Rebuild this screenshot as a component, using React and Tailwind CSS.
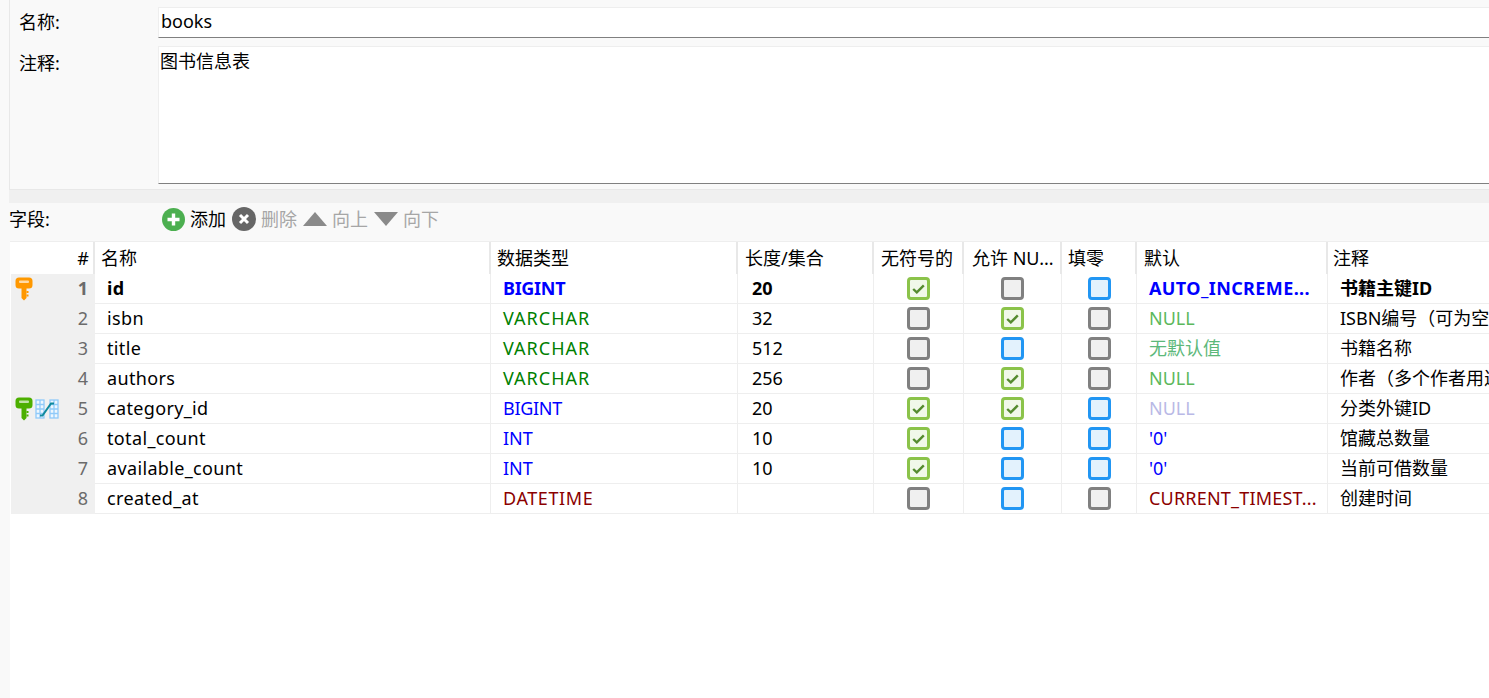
import React from "react";

const gridCols = "grid grid-cols-[84px_396px_247px_136px_90px_98px_75px_191px_161px]";

const headers = [
  { label: "名称", pad: "pl-[6px]" },
  { label: "数据类型", pad: "pl-[6px]" },
  { label: "长度/集合", pad: "pl-[7px]" },
  { label: "无符号的", pad: "pl-[7px]" },
  { label: "允许 NU...", pad: "pl-[8px]" },
  { label: "填零", pad: "pl-[6px]" },
  { label: "默认", pad: "pl-[7px]" },
  { label: "注释", pad: "pl-[5px]" },
];

const blue = "text-[#0000ff]";
const green = "text-[#008000]";
const red = "text-[#8b0000]";

// spacing per type, the screenshot's UI font sets capitals a bit wider
const typeSpacing = {
  BIGINT: "tracking-[-0.3px]",
  INT: "",
  VARCHAR: "tracking-[1px]",
  DATETIME: "tracking-[0.6px]",
};

const rows = [
  { n: 1, key: "orange", name: "id", type: "BIGINT", color: blue, len: "20", checks: ["on", "off", "na"], def: "AUTO_INCREME...", defColor: blue, defSpacing: "tracking-[0.4px]", note: "书籍主键ID", bold: true },
  { n: 2, name: "isbn", type: "VARCHAR", color: green, len: "32", checks: ["off", "on", "off"], def: "NULL", defColor: "text-[#5cb85c]", note: "ISBN编号（可为空）" },
  { n: 3, name: "title", type: "VARCHAR", color: green, len: "512", checks: ["off", "na", "off"], def: "无默认值", defColor: "text-[#5cb87a]", note: "书籍名称" },
  { n: 4, name: "authors", type: "VARCHAR", color: green, len: "256", checks: ["off", "on", "off"], def: "NULL", defColor: "text-[#5cb85c]", note: "作者（多个作者用逗号分隔）" },
  { n: 5, key: "green", fk: true, name: "category_id", type: "BIGINT", color: blue, len: "20", checks: ["on", "on", "na"], def: "NULL", defColor: "text-[#b9b9e6]", note: "分类外键ID" },
  { n: 6, name: "total_count", type: "INT", color: blue, len: "10", checks: ["on", "na", "na"], def: "'0'", defColor: blue, note: "馆藏总数量" },
  { n: 7, name: "available_count", type: "INT", color: blue, len: "10", checks: ["on", "na", "na"], def: "'0'", defColor: blue, note: "当前可借数量" },
  { n: 8, name: "created_at", type: "DATETIME", color: red, len: "", checks: ["off", "na", "off"], def: "CURRENT_TIMEST...", defColor: red, defSpacing: "tracking-[0.2px]", note: "创建时间" },
];

const KeyIcon = ({ color }) => (
  <svg width="18" height="24" viewBox="0 0 18 24" className="shrink-0">
    <path
      d="M4 0.5h10a3.5 3.5 0 0 1 3.5 3.5v4a3.5 3.5 0 0 1-3.5 3.5h-2.5v9.5l-2.5 2.5-2.5-2.5v-9.5H4A3.5 3.5 0 0 1 .5 8V4A3.5 3.5 0 0 1 4 .5z"
      fill={color}
    />
    <rect x="4" y="3.5" width="10" height="2.5" rx="1" fill="#ffffff" opacity="0.65" />
    <path d="M11.5 14h2v2h-2zM11.5 17.5h2v2h-2z" fill={color} />
  </svg>
);

const ForeignKeyIcon = () => (
  <svg width="24" height="20" viewBox="0 0 24 20" className="shrink-0">
    <g stroke="#90caf9" strokeWidth="1.3" fill="#eef7fe">
      <rect x="1" y="1" width="8" height="18" />
      <rect x="15" y="1" width="8" height="18" />
      <path d="M1 5.5h8M1 10h8M1 14.5h8M5 1v18M15 5.5h8M15 10h8M15 14.5h8M19 1v18" fill="none" />
    </g>
    <path d="M5 16.5h2.5L16 4.5h3" stroke="#0f8a9d" strokeWidth="2" fill="none" />
  </svg>
);

const Check = ({ state }) => {
  const styles = {
    on: "border-[#8bc34a] bg-[#f1f8e9]",
    off: "border-[#808080] bg-[#f0f0f0]",
    na: "border-[#2196f3] bg-[#e3f2fd]",
  };
  return (
    <div className={`flex h-[23px] w-[23px] items-center justify-center rounded-[4px] border-[3px] ${styles[state]}`}>
      {state === "on" && (
        <svg width="13" height="10" viewBox="0 0 13 10">
          <path d="M1.2 5l3.6 3.4 7-7" stroke="#558b2f" strokeWidth="2.4" fill="none" />
        </svg>
      )}
    </div>
  );
};

const ToolButton = ({ icon, label, muted }) => (
  <div className="flex items-center gap-[5px]">
    {icon}
    <span className={muted ? "text-[#a6a6a6]" : "text-black"}>{label}</span>
  </div>
);

const Row = ({ row }) => {
  const weight = row.bold ? "font-bold" : "";
  const cell = "flex h-[30px] items-center overflow-hidden whitespace-nowrap border-b border-r border-[#eeeeee]";
  return (
    <div className={`${gridCols} ${weight}`}>
      <div className="flex h-[30px] items-center bg-[#f0f0f0] pl-[4px] pr-[7px]">
        {row.key && <KeyIcon color={row.key === "orange" ? "#ff9800" : "#4caf00"} />}
        {row.fk && <div className="ml-[2px]"><ForeignKeyIcon /></div>}
        <span className="mb-[2px] ml-auto text-[#6b6b6b]">{row.n}</span>
      </div>
      <div className={`${cell} pb-[2px] pl-[12px] tracking-[0.35px]`}>{row.name}</div>
      <div className={`${cell} pb-[2px] pl-[12px] ${row.color} ${typeSpacing[row.type]}`}>{row.type}</div>
      <div className={`${cell} pb-[2px] pl-[14px]`}>{row.len}</div>
      {row.checks.map((state, i) => (
        <div key={i} className={`${cell} justify-center`}>
          <Check state={state} />
        </div>
      ))}
      <div className={`${cell} pb-[2px] pl-[12px] ${row.defColor} ${row.defSpacing || ""}`}>{row.def}</div>
      <div className={`${cell} border-r-0 pb-[2px] pl-[12px]`}>{row.note}</div>
    </div>
  );
};

export default function App() {
  return (
    <div className="flex h-[698px] w-[1489px] flex-col overflow-hidden bg-[#f9f9f9] pl-[9px] font-['Noto_Sans','Noto_Sans_CJK_SC',sans-serif] text-[18px] leading-[24px] text-black">
      {/* table options */}
      <div className="flex h-[190px] shrink-0 flex-col gap-[8px] border-b border-l border-[#e8e8e8] pl-[9px] pt-[7px]">
        <div className="flex">
          <div className="w-[139px] pt-[3px]">名称:</div>
          <div className="h-[31px] flex-1 border-b border-l border-t border-b-[#808080] border-l-[#eeeeee] border-t-[#eeeeee] bg-white pl-[2px] pt-[1px]">books</div>
        </div>
        <div className="flex">
          <div className="w-[139px] pt-[5px]">注释:</div>
          <div className="h-[138px] flex-1 border-b border-l border-t border-b-[#808080] border-l-[#eeeeee] border-t-[#eeeeee] bg-white pl-[1px] pt-[2px]">图书信息表</div>
        </div>
      </div>
      <div className="h-[13px] shrink-0 bg-[#f0f0f0]" />

      {/* field toolbar */}
      <div className="flex h-[38px] shrink-0 items-center pb-[6px]">
        <div className="w-[153px]">字段:</div>
        <div className="flex items-center gap-[6px]">
          <ToolButton
            label="添加"
            icon={
              <svg width="23" height="23" viewBox="0 0 23 23">
                <circle cx="11.5" cy="11.5" r="11.5" fill="#4caf50" />
                <path d="M11.5 5.5v12M5.5 11.5h12" stroke="#ffffff" strokeWidth="3.4" />
              </svg>
            }
          />
          <ToolButton
            muted
            label="删除"
            icon={
              <svg width="24" height="24" viewBox="0 0 24 24">
                <circle cx="12" cy="12" r="12" fill="#666666" />
                <path d="M8 8l8 8M16 8l-8 8" stroke="#ffffff" strokeWidth="3" />
              </svg>
            }
          />
          <ToolButton
            muted
            label="向上"
            icon={
              <svg width="24" height="14" viewBox="0 0 24 14">
                <path d="M12 0L24 14H0z" fill="#8a8a8a" />
              </svg>
            }
          />
          <ToolButton
            muted
            label="向下"
            icon={
              <svg width="24" height="14" viewBox="0 0 24 14">
                <path d="M0 0H24L12 14z" fill="#8a8a8a" />
              </svg>
            }
          />
        </div>
      </div>

      {/* field grid */}
      <div className="ml-[1px] flex-1 border-t border-[#eeeeee] bg-white pl-[1px]">
        <div className={gridCols}>
          <div className="flex h-[32px] items-center justify-end border-r-2 border-[#e8e8e8] pr-[4px]">#</div>
          {headers.map((h, i) => (
            <div
              key={h.label}
              className={`flex h-[32px] items-center overflow-hidden whitespace-nowrap border-[#e8e8e8] ${h.pad} ${i < headers.length - 1 ? "border-r-2" : ""}`}
            >
              {h.label}
            </div>
          ))}
        </div>
        {rows.map((row) => (
          <Row key={row.n} row={row} />
        ))}
      </div>
    </div>
  );
}
